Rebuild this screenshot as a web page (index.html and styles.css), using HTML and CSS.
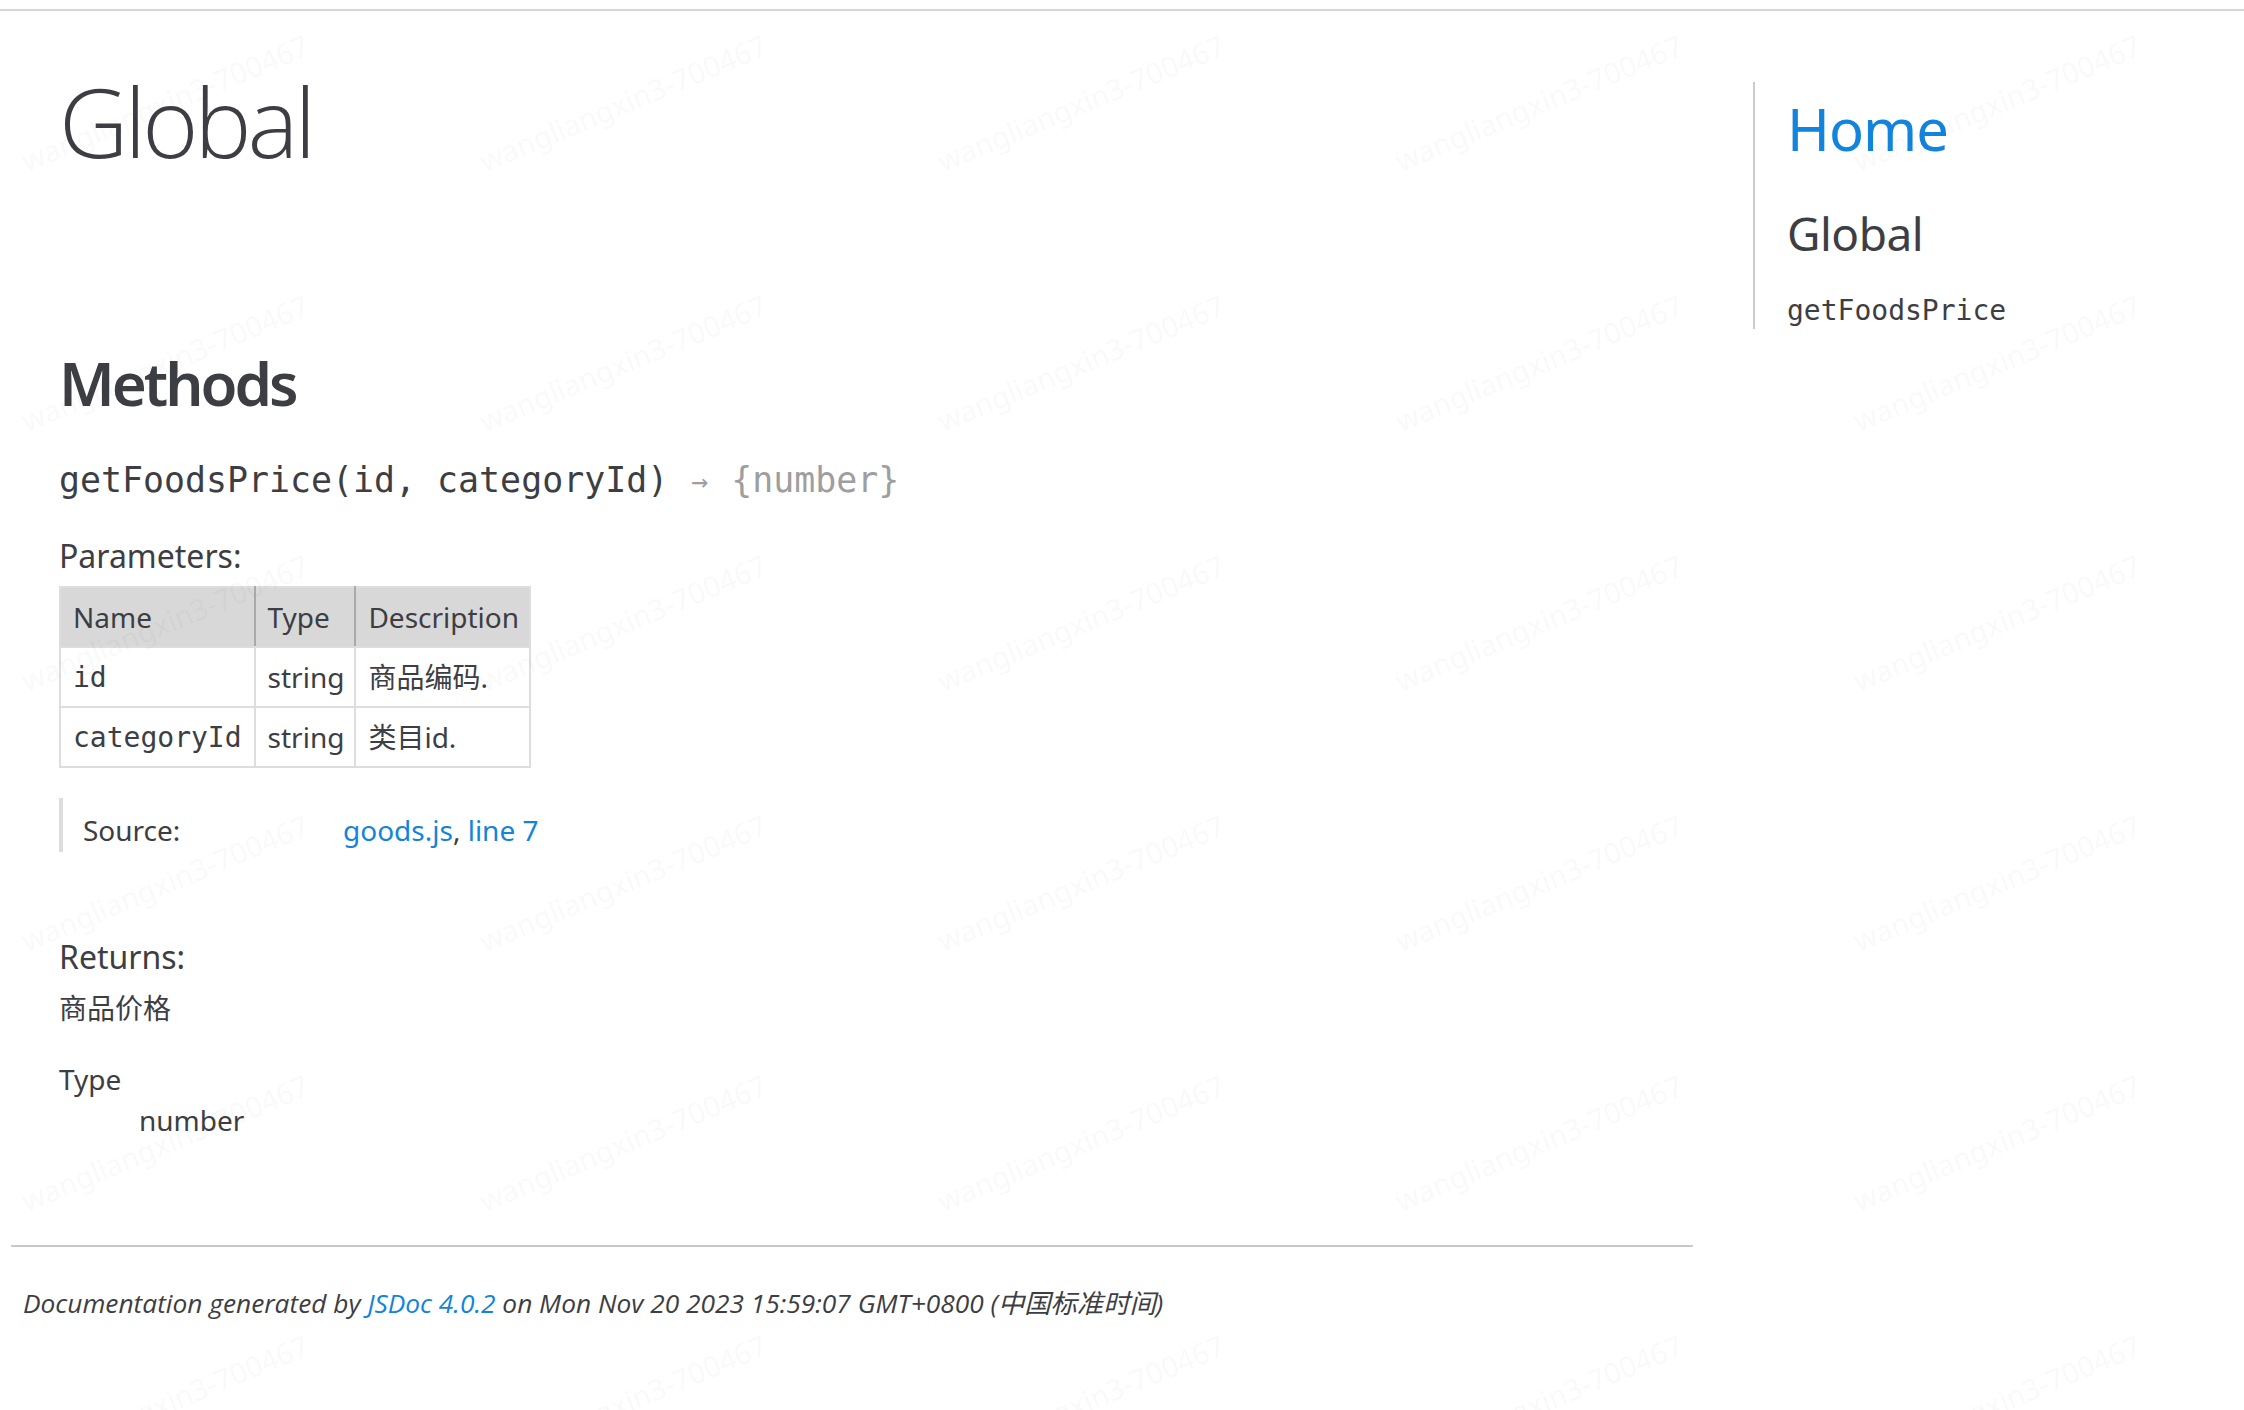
FILE: index.html
```html
<!DOCTYPE html>
<html lang="zh">
<head>
<meta charset="utf-8">
<title>JSDoc: Global</title>
<link rel="stylesheet" href="styles.css">
</head>
<body>
<div class="topline"></div>
<div class="page">
  <div class="main">
    <h1 class="page-title">Global</h1>
    <section class="doc">
      <h3 class="subsection-title">Methods</h3>
      <h4 class="name">getFoodsPrice(id, categoryId) <span class="type-signature"><span class="arrow">→</span> {number}</span></h4>
      <h5 class="label">Parameters:</h5>
      <table class="params">
        <thead>
          <tr><th>Name</th><th>Type</th><th class="last">Description</th></tr>
        </thead>
        <tbody>
          <tr><td class="pname">id</td><td>string</td><td>商品编码.</td></tr>
          <tr><td class="pname">categoryId</td><td>string</td><td>类目id.</td></tr>
        </tbody>
      </table>
      <dl class="details">
        <dt>Source:</dt>
        <dd><a href="#">goods.js</a>, <a href="#">line 7</a></dd>
      </dl>
      <h5 class="label returns">Returns:</h5>
      <div class="param-desc">商品价格</div>
      <dl class="ret-type">
        <dt>Type</dt>
        <dd>number</dd>
      </dl>
    </section>
  </div>
  <nav class="side">
    <h2 class="home"><a href="#">Home</a></h2>
    <h3 class="nav-global">Global</h3>
    <ul class="nav-list">
      <li><a href="#">getFoodsPrice</a></li>
    </ul>
  </nav>
</div>
<footer class="foot">
  Documentation generated by <a href="#">JSDoc 4.0.2</a> on Mon Nov 20 2023 15:59:07 GMT+0800 (中国标准时间)
</footer>
<div class="wm-layer" aria-hidden="true">
  <div class="wm-grid">
    <span>wangliangxin3-700467</span><span>wangliangxin3-700467</span><span>wangliangxin3-700467</span><span>wangliangxin3-700467</span><span>wangliangxin3-700467</span>
    <span>wangliangxin3-700467</span><span>wangliangxin3-700467</span><span>wangliangxin3-700467</span><span>wangliangxin3-700467</span><span>wangliangxin3-700467</span>
    <span>wangliangxin3-700467</span><span>wangliangxin3-700467</span><span>wangliangxin3-700467</span><span>wangliangxin3-700467</span><span>wangliangxin3-700467</span>
    <span>wangliangxin3-700467</span><span>wangliangxin3-700467</span><span>wangliangxin3-700467</span><span>wangliangxin3-700467</span><span>wangliangxin3-700467</span>
    <span>wangliangxin3-700467</span><span>wangliangxin3-700467</span><span>wangliangxin3-700467</span><span>wangliangxin3-700467</span><span>wangliangxin3-700467</span>
    <span>wangliangxin3-700467</span><span>wangliangxin3-700467</span><span>wangliangxin3-700467</span><span>wangliangxin3-700467</span><span>wangliangxin3-700467</span>
  </div>
</div>
</body>
</html>
```
FILE: styles.css
```css
html, body {
  margin: 0;
  padding: 0;
  background: #fff;
}

body {
  font-family: "Noto Sans", "Noto Sans CJK SC", sans-serif;
  font-size: 28px;
  line-height: 36px;
  color: #3d3e43;
}

a, a:visited, a:active {
  color: #1384dc;
  text-decoration: none;
}

.topline {
  height: 2px;
  margin-top: 9px;
  background: #d6d6d6;
}

.page {
  display: flex;
  align-items: flex-start;
  padding-left: 11px;
}

.main {
  width: 1742px;
  flex: none;
}

.page-title {
  font-family: "Open Sans", "Noto Sans", sans-serif;
  font-weight: 300;
  font-size: 96px;
  line-height: 125px;
  letter-spacing: -4px;
  margin: 47px 0 0 48px;
}

.doc {
  margin-right: 60px;
  padding: 0 48px 107px;
  border-bottom: 2px solid #c8c8c8;
}

.subsection-title {
  font-size: 60px;
  line-height: 78px;
  font-weight: 600;
  letter-spacing: -3px;
  margin: 161px 0 0;
}

.name {
  font-family: "DejaVu Sans Mono", "Noto Sans CJK SC", monospace;
  font-size: 34.9px;
  line-height: 44px;
  font-weight: 400;
  margin: 36px 0 0;
}

.type-signature {
  color: #9e9e9e;
}

.arrow {
  display: inline-block;
  font-size: 28px;
  width: 21px;
  text-align: center;
  vertical-align: 1px;
}

.label {
  font-size: 32px;
  line-height: 40px;
  font-weight: 400;
  margin: 32px 0 0;
}

.label.returns {
  margin-top: 85px;
}

.params {
  border-collapse: collapse;
  margin-top: 10px;
}

.params th,
.params td {
  border: 2px solid #dddddd;
  padding: 11px 10px 10px 12px;
  line-height: 37px;
  text-align: left;
  vertical-align: top;
  font-weight: 400;
}

.params th:first-child,
.params td:first-child {
  padding-right: 12px;
}

.params thead tr {
  background: #d8d8d8;
}

.params th {
  border-right: 2px solid #a9a9a9;
}

.params th.last {
  border-right: 2px solid #dddddd;
}

.pname {
  font-family: "DejaVu Sans Mono", monospace;
  font-size: 28px;
}

.details {
  display: flex;
  margin: 30px 0 0;
  padding: 14px 0 4px;
  border-left: 4px solid #dddddd;
}

.details dt {
  width: 260px;
  padding-left: 20px;
  flex: none;
}

.details dd {
  margin: 0;
}

.param-desc {
  margin-top: 13px;
}

.ret-type {
  margin: 35px 0 0;
}

.ret-type dt {
  margin: 0;
}

.ret-type dd {
  margin: 5px 0 0 80px;
}

.side {
  flex: none;
  margin-top: 71px;
  padding: 9px 0 0 32px;
  border-left: 2px solid #cccccc;
}

.home {
  font-size: 58px;
  line-height: 75px;
  font-weight: 400;
  letter-spacing: -1px;
  margin: 0;
}

.nav-global {
  font-size: 46px;
  line-height: 60px;
  font-weight: 400;
  letter-spacing: -0.5px;
  margin: 37px 0 0;
}

.nav-list {
  list-style: none;
  margin: 28px 0 0;
  padding: 0;
}

.nav-list a {
  font-family: "DejaVu Sans Mono", monospace;
  font-size: 28px;
  line-height: 36px;
  color: #3d3e43;
}

.foot {
  padding: 39px 12px 12px;
  margin-left: 11px;
  font-family: "Open Sans", "Noto Sans", "Noto Sans CJK SC", sans-serif;
  font-style: italic;
  font-size: 26.3px;
  line-height: 34px;
}

.wm-layer {
  position: fixed;
  inset: 0;
  overflow: hidden;
  pointer-events: none;
}

.wm-grid {
  display: grid;
  grid-template-columns: repeat(5, 458px);
  grid-auto-rows: 260px;
  transform: translate(-64px, -27px);
}

.wm-grid span {
  justify-self: center;
  align-self: center;
  white-space: nowrap;
  font-family: "Noto Sans", sans-serif;
  font-size: 29px;
  color: rgba(0, 0, 0, 0.025);
  transform: rotate(-22.6deg);
}
```
